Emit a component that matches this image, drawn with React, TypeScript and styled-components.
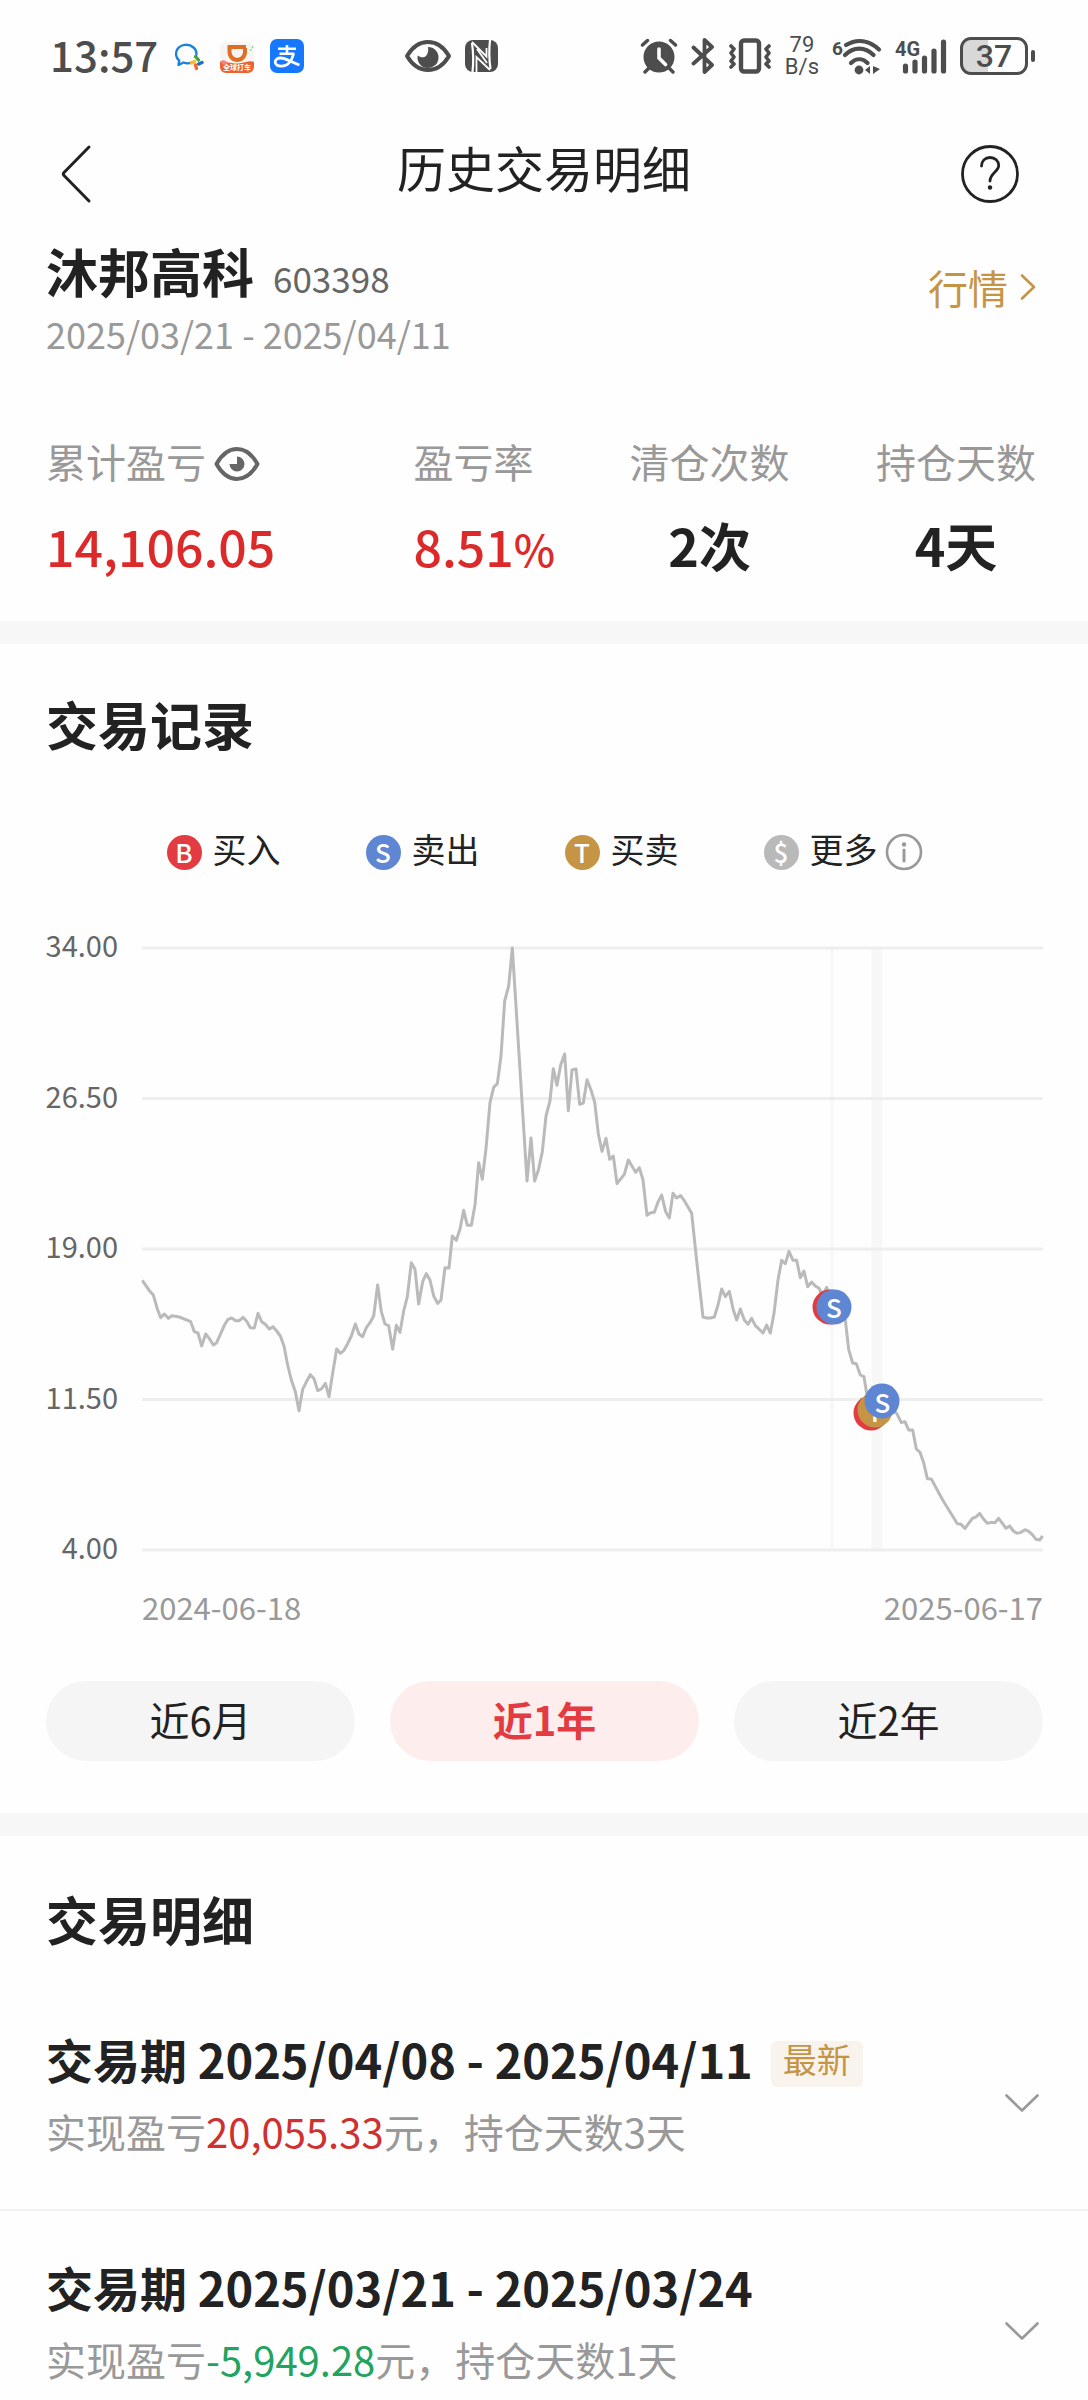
import React, { useState } from "react";
import styled, { createGlobalStyle } from "styled-components";

const GlobalStyle = createGlobalStyle`
  *, *::before, *::after { box-sizing: border-box; }
  body {
    margin: 0;
    background: #fefefe;
    color: #222;
    font-family: "Noto Sans CJK SC", "Noto Sans", sans-serif;
  }
  h1, h2, h3, p, ul, dl, dt, dd { margin: 0; padding: 0; font-weight: inherit; }
  ul { list-style: none; }
  button { margin: 0; padding: 0; border: 0; background: none; color: inherit; font: inherit; cursor: pointer; }
  svg { display: block; flex: none; }
`;

const RED = "#e23b41";
const BLUE = "#5f86d3";
const GOLD = "#c59545";
const GREY = "#b9b9b9";

/* ---------- status bar ---------- */

const StatusBar = styled.div`
  display: flex;
  align-items: center;
  height: 112px;
  padding: 0 52px 0 50px;
  color: #4d4d4d;
`;

const StatusGroup = styled.div<{ $gap: number; $before?: string }>`
  display: flex;
  align-items: center;
  gap: ${(p) => p.$gap}px;
  margin-left: ${(p) => p.$before ?? "0"};
`;

const Clock = styled.span`
  font-size: 42px;
  line-height: 48px;
  font-weight: 500;
  padding-bottom: 4px;
`;

const NetSpeed = styled.span`
  display: flex;
  flex-direction: column;
  align-items: center;
  font-family: Roboto, sans-serif;
  font-size: 22px;
  line-height: 22px;
`;

const WeComIcon = () => (
  <svg width="30" height="34" viewBox="0 0 30 34" fill="none">
    <path d="M17.5 23.5c-2.200 1-5.500 1-8 0L4.500 26l.700-4.300C1.500 18.500 1 13.500 3.500 10 7 5 15 4.500 19.500 8.500c2.300 2 3.200 4.600 2.900 7.300" stroke="#1b83d8" strokeWidth="2.400" strokeLinejoin="round" strokeLinecap="round" />
    <path d="M21.500 17.500l3 3.500" stroke="#3fa63f" strokeWidth="3.400" strokeLinecap="round" />
    <path d="M28 23.500l-3.300 1.500" stroke="#1b6fd0" strokeWidth="3.400" strokeLinecap="round" />
    <path d="M22.500 29.500l-1-3.500" stroke="#ee6a35" strokeWidth="3.400" strokeLinecap="round" />
    <path d="M17.500 24l3-1.500" stroke="#f6bf2d" strokeWidth="3.400" strokeLinecap="round" />
  </svg>
);

const DidiIcon = () => (
  <svg width="34" height="34" viewBox="0 0 34 34">
    <rect x="0" y="3" width="34" height="31" rx="6" fill="#f7f5f3" />
    <path d="M7.500 6h19.500v6.500C27 18.500 23 23 17.200 23S7.500 18.500 7.500 12.500z" fill="#e06d24" />
    <path d="M11.500 10h11.500v2.500c0 3.700-2.400 6.300-5.700 6.300s-5.800-2.600-5.800-6.300z" fill="#f7f5f3" />
    <path d="M26 6h2v3h-2z" fill="#f7f5f3" />
    <path d="M30 12l1.500-2M32 9l1-2" stroke="#7fd58c" strokeWidth="1.200" />
    <path d="M0 23c5-1.500 9 2 17 1.500S30 21 34 23v5a6 6 0 0 1-6 6H6a6 6 0 0 1-6-6z" fill="#ee6231" />
    <path d="M0 23c2-3 6-2 8 1l-4 2z" fill="#f3837b" />
    <text x="17" y="31" textAnchor="middle" fontSize="7" fontWeight="700" fill="#fff">全球打车</text>
  </svg>
);

const AlipayIcon = () => (
  <svg width="34" height="34" viewBox="0 0 34 34">
    <rect width="34" height="34" rx="7" fill="#1677ff" />
    <g fill="none" stroke="#fff" strokeWidth="2.600">
      <path d="M17 6v9M8 9.800h18M9.500 14.800h15" />
      <path d="M23.500 15c-1.500 6-5.500 12.200-12 12.200-4 0-6.300-1.700-6.300-4.200 0-2.600 2.400-4 5.300-4 5.500 0 11 4.500 19 7" strokeWidth="2.800" />
    </g>
  </svg>
);

const StatusEyeIcon = () => (
  <svg width="48" height="34" viewBox="0 0 48 34" fill="none">
    <path d="M3 17C8 8.500 15 3 24 3s16 5.500 21 14c-5 8.500-12 14-21 14S8 25.500 3 17z" stroke="#4d4d4d" strokeWidth="4" strokeLinejoin="round" />
    <path d="M24 8a10.500 10.500 0 1 1-10.300 8.500c2.500 2 6.300 2.500 8.300.500 2.200-2.200 2.600-6 2-9z" fill="#4d4d4d" />
  </svg>
);

const NfcIcon = () => (
  <svg width="33" height="34" viewBox="0 0 33 34">
    <rect x="0" y="1" width="33" height="32" rx="8" fill="#4d4d4d" />
    <path d="M7 4c1.500 10 1.500 20 .500 29M25 1c-1 9-1 19 .500 29" fill="none" stroke="#fefefe" strokeWidth="2.200" />
    <path d="M7 3l14.500 14.500V9M11.500 33V18L25 31M12 10l10 14" fill="none" stroke="#fefefe" strokeWidth="1.800" />
  </svg>
);

const AlarmIcon = () => (
  <svg width="38" height="36" viewBox="0 0 38 36" fill="none" stroke="#4d4d4d" strokeLinecap="round">
    <circle cx="19" cy="19" r="15.500" fill="#4d4d4d" stroke="none" />
    <path d="M2.500 7l5-4.500M35.500 7l-5-4.500M5 34l4-4M33 34l-4-4" strokeWidth="3.400" />
    <path d="M19 11v9l6.500 6.500" stroke="#fefefe" strokeWidth="3.600" />
  </svg>
);

const BluetoothIcon = () => (
  <svg width="24" height="36" viewBox="0 0 24 36" fill="none" stroke="#4d4d4d" strokeWidth="3.800" strokeLinejoin="round" strokeLinecap="round">
    <path d="M2.500 9.500L21 27l-7.500 7V2L21 9 2.500 25.500" />
  </svg>
);

const VibrateIcon = () => (
  <svg width="44" height="36" viewBox="0 0 44 36" fill="none" stroke="#4d4d4d" strokeLinejoin="round" strokeLinecap="round">
    <rect x="13" y="2.500" width="18" height="31" rx="3" strokeWidth="4.400" />
    <path d="M3 8l3 3-3 4 3 4-3 4 3 3-3 3M41 8l-3 3 3 4-3 4 3 4-3 3 3 3" strokeWidth="3.600" />
  </svg>
);

const WifiIcon = () => (
  <svg width="50" height="38" viewBox="0 0 50 38" overflow="visible" fill="none" stroke="#4d4d4d" strokeWidth="4.200" strokeLinecap="round">
    <text x="0" y="18" fontFamily="Roboto, sans-serif" fontSize="19" fontWeight="700" fill="#4d4d4d" stroke="none">6</text>
    <path d="M14 8c11-6.500 23-5 33 4.500M13 18c8.500-8.500 20-8.500 28.500 0M19 26c5-5 11.500-5 16.500 0" />
    <circle cx="27" cy="33" r="4.400" fill="#4d4d4d" stroke="none" />
    <path d="M38 29v8l-5-4zM41 29l7 3-7 5z" fill="#4d4d4d" stroke="none" />
  </svg>
);

const SignalIcon = () => (
  <svg width="52" height="38" viewBox="0 0 52 38" overflow="visible" fill="none" stroke="#4d4d4d" strokeWidth="5.200" strokeLinecap="round">
    <text x="0" y="19" fontFamily="Roboto, sans-serif" fontSize="20" fontWeight="700" fill="#4d4d4d" stroke="none">4G</text>
    <path d="M10.500 29v5M20 25v9M29.500 21v13M39 14v20M48.500 5v29" />
  </svg>
);

const Battery = styled.span`
  position: relative;
  display: flex;
  align-items: center;
  justify-content: center;
  width: 68px;
  height: 38px;
  margin-right: 8px;
  border: 3px solid #4d4d4d;
  border-radius: 11px;
  background: linear-gradient(to right, #d8d8d8 40%, transparent 40%);
  font-family: Roboto, sans-serif;
  font-size: 32px;
  line-height: 32px;
  font-weight: 500;

  &::after {
    content: "";
    position: absolute;
    right: -10px;
    top: 10px;
    width: 4px;
    height: 12px;
    border-radius: 2px;
    background: #4d4d4d;
  }
`;

/* ---------- header ---------- */

const Header = styled.header`
  display: grid;
  grid-template-columns: 76px 1fr 76px;
  align-items: start;
  padding: 26px 60px 25px;
`;

const HeaderButton = styled.button<{ $align: string }>`
  display: flex;
  align-items: center;
  justify-content: ${(p) => p.$align};
  height: 72px;
`;

const PageTitle = styled.h1`
  text-align: center;
  font-size: 49px;
  line-height: 58px;
  font-weight: 400;
`;

/* ---------- stock summary ---------- */

const Summary = styled.section`
  padding: 6px 52px 46px 46px;
`;

const StockHead = styled.div`
  display: flex;
  align-items: center;
  justify-content: space-between;
`;

const StockName = styled.h2`
  display: flex;
  align-items: baseline;
  gap: 19px;
  font-size: 52px;
  line-height: 60px;
  font-weight: 700;
`;

const StockCode = styled.span`
  font-size: 35px;
  line-height: 36px;
  font-weight: 400;
  color: #666;
`;

const DateRange = styled.p`
  margin-top: 8px;
  font-size: 36px;
  line-height: 48px;
  color: #999;
`;

const QuoteLink = styled.a`
  display: flex;
  align-items: center;
  gap: 12px;
  padding-bottom: 24px;
  font-size: 40px;
  line-height: 48px;
  color: ${GOLD};
  text-decoration: none;
`;

const Stats = styled.dl`
  display: grid;
  grid-template-columns: 1.7fr 1fr 1.14fr auto;
  margin-top: 80px;
`;

const Stat = styled.div<{ $centered?: boolean }>`
  justify-self: start;
  text-align: ${(p) => (p.$centered ? "center" : "left")};
`;

const StatLabel = styled.dt`
  display: flex;
  align-items: center;
  gap: 8px;
  font-size: 40px;
  line-height: 48px;
  color: #999;
`;

const StatValue = styled.dd<{ $gain?: boolean }>`
  margin-top: 30px;
  font-size: ${(p) => (p.$gain ? 50 : 52)}px;
  line-height: 60px;
  font-weight: ${(p) => (p.$gain ? 500 : 700)};
  color: ${(p) => (p.$gain ? "#dc2a2b" : "#222")};
  white-space: nowrap;
`;

const Percent = styled.span`
  font-size: 44px;
  line-height: 44px;
`;

const IconButton = styled.button`
  display: flex;
  align-items: center;
`;

const EyeButton = styled(IconButton)`
  padding-top: 6px;
`;

const Divider = styled.div`
  height: 23px;
  background: #f7f7f7;
`;

/* ---------- records ---------- */

const Panel = styled.section`
  padding: 50px 45px 52px 46px;
`;

const SectionTitle = styled.h2`
  font-size: 52px;
  line-height: 60px;
  font-weight: 700;
`;

const Legend = styled.ul`
  display: flex;
  justify-content: center;
  gap: 85px;
  margin-top: 78px;
`;

const LegendItem = styled.li`
  display: flex;
  align-items: center;
  gap: 11px;
  height: 40px;
`;

const LegendText = styled.span`
  padding-bottom: 6px;
  font-size: 34px;
  line-height: 40px;
`;

const Badge = styled.span<{ $color: string }>`
  display: flex;
  align-items: center;
  justify-content: center;
  width: 35px;
  height: 35px;
  border-radius: 50%;
  background: ${(p) => p.$color};
  color: #fff;
  font-size: 26px;
  line-height: 34px;
  font-weight: 500;
`;

const InfoButton = styled(IconButton)`
  margin-left: -4px;
`;

const Chart = styled.div`
  display: grid;
  grid-template-columns: 72px 1fr;
  column-gap: 24px;
  margin-top: 57px;
`;

const AxisLabels = styled.div`
  display: flex;
  flex-direction: column;
  justify-content: space-between;
  align-items: flex-end;
  height: 632px;
  font-size: 29px;
  line-height: 30px;
  color: #666;
`;

const Plot = styled.div`
  position: relative;
  height: 602px;
  margin-top: 19px;
`;

const PlotSvg = styled.svg`
  width: 100%;
  height: 100%;
  overflow: visible;
`;

const Marker = styled(Badge)`
  position: absolute;
  transform: translate(-50%, -50%);
`;

const AxisDates = styled.div`
  display: flex;
  justify-content: space-between;
  grid-column: 2;
  margin-top: 26px;
  font-size: 31px;
  line-height: 40px;
  color: #999;
`;

const RangeTabs = styled.div`
  display: grid;
  grid-template-columns: repeat(3, 1fr);
  gap: 35px;
  margin-top: 54px;
`;

const RangeTab = styled.button<{ $active: boolean }>`
  height: 80px;
  border-radius: 40px;
  background: ${(p) => (p.$active ? "#feeded" : "#f5f5f5")};
  color: ${(p) => (p.$active ? RED : "#222")};
  font-size: 40px;
  line-height: 48px;
  padding-bottom: 4px;
  font-weight: ${(p) => (p.$active ? 700 : 400)};
`;

/* ---------- details ---------- */

const Details = styled.section`
  padding-top: 53px;
`;

const DetailsTitle = styled(SectionTitle)`
  padding: 0 46px 34px;
`;

const Period = styled.li`
  display: flex;
  align-items: flex-end;
  justify-content: space-between;
  padding: 48px 48px 54px 46px;
  border-bottom: 2px solid #f2f2f2;

  &:last-child {
    padding-bottom: 16px;
    border-bottom: 0;
  }
`;

const PeriodHead = styled.div`
  display: flex;
  align-items: flex-end;
  gap: 18px;
`;

const PeriodTitle = styled.h3`
  font-size: 47px;
  line-height: 56px;
  font-weight: 700;
`;

const Tag = styled.span`
  padding: 0 12px 10px;
  border-radius: 6px;
  background: #f8f4ed;
  color: ${GOLD};
  font-size: 34px;
  line-height: 36px;
`;

const PeriodInfo = styled.p`
  margin-top: 20px;
  font-size: 40px;
  line-height: 48px;
  color: #999;
`;

const Amount = styled.span<{ $loss: boolean }>`
  color: ${(p) => (p.$loss ? "#22a35f" : "#cf3030")};
`;

const ExpandButton = styled(IconButton)`
  height: 104px;
`;

const EyeIcon = () => (
  <svg width="46" height="36" viewBox="0 0 46 36" fill="none">
    <path d="M2.500 18C7.500 9 14 3 23 3s15.500 6 20.500 15C38.500 27 32 33 23 33S7.500 27 2.500 18z" stroke="#666" strokeWidth="4" strokeLinejoin="round" />
    <path d="M23 10.500A7.500 7.500 0 1 1 15.500 18H23z" fill="#666" />
  </svg>
);

const InfoIcon = () => (
  <svg width="38" height="38" viewBox="0 0 38 38" fill="none">
    <circle cx="19" cy="19" r="17" stroke="#999" strokeWidth="2.600" />
    <circle cx="19" cy="11.500" r="2.200" fill="#999" />
    <path d="M19 17v11" stroke="#999" strokeWidth="3" strokeLinecap="round" />
  </svg>
);

/* Plot coordinates: 2703 wide, 1806 tall, origin at the top left. */
const PLOT_W = 2703;
const PLOT_H = 1806;

const priceLine = `
1,997 22,1028 34,1041 46,1083 56,1109 67,1098 79,1111 90,1103 112,1107 146,1121 157,1151 168,1155
179,1194 191,1158 202,1172 214,1191 224,1184 247,1132 258,1114 269,1110 281,1118 292,1118 303,1108
314,1120 325,1139 337,1140 348,1096 359,1121 370,1129 382,1143 393,1136 404,1149 415,1164 426,1194
437,1251 448,1296 460,1331 471,1388 482,1324 494,1300 505,1280 516,1292 527,1328 538,1323 550,1306
561,1346 572,1276 584,1203 595,1216 606,1207 617,1187 628,1164 640,1128 651,1158 662,1166 673,1139
684,1124 695,1104 707,1011 718,1091 729,1128 740,1133 752,1204 763,1132 774,1153 785,1089 796,1046
808,944 819,964 830,1068 842,1001 853,977 864,996 875,1044 887,1066 897,1056 909,959 921,960
931,864 943,877 954,843 965,787 976,832 988,832 999,771 1010,644 1021,694 1032,601 1044,464
1055,418 1066,407 1077,324 1088,159 1100,114 1111,0 1155,699 1167,570 1178,699 1189,667 1201,611
1212,504 1224,458 1234,362 1245,412 1256,351 1268,318 1279,488 1290,366 1302,363 1313,469 1324,465
1335,395 1347,426 1358,462 1369,558 1380,610 1392,571 1403,634 1414,624 1425,707 1447,679 1459,636
1481,673 1492,659 1503,696 1515,802 1526,794 1537,793 1549,760 1559,741 1571,791 1582,810 1593,736
1604,750 1616,743 1627,758 1649,796 1666,956 1683,1107 1694,1110 1706,1110 1717,1107 1728,1071
1739,1023 1750,1046 1762,1030 1773,1082 1784,1116 1795,1083 1807,1116 1818,1129 1829,1111 1840,1133
1852,1144 1863,1155 1874,1131 1885,1155 1896,1096 1908,996 1919,937 1930,947 1941,910 1953,937
1964,937 1975,989 1986,969 1997,1016 2009,1002 2020,1014 2031,1021 2042,1041 2054,1018 2065,1046
2094,1076 2110,1116 2120,1204 2132,1245 2143,1247 2155,1281 2166,1286 2174,1336 2199,1396 2214,1361
2264,1396 2278,1424 2289,1421 2300,1446 2312,1446 2323,1503 2334,1513 2345,1544 2356,1592 2368,1593
2402,1656 2446,1727 2457,1729 2469,1741 2491,1711 2502,1707 2513,1696 2525,1714 2536,1726 2547,1723
2559,1724 2570,1711 2592,1741 2603,1734 2614,1749 2625,1756 2637,1753 2649,1745 2660,1750 2671,1760
2682,1774 2693,1776 2702,1764`;

const holdBands = [
  { x: 2065, width: 10 },
  { x: 2189, width: 32 },
];

const markers = [
  { x: 2064, y: 1076, color: RED, letter: "" },
  { x: 2076, y: 1076, color: BLUE, letter: "S" },
  { x: 2188, y: 1394, color: RED, letter: "" },
  { x: 2199, y: 1386, color: GOLD, letter: "T" },
  { x: 2221, y: 1360, color: BLUE, letter: "S" },
];

const legend = [
  { letter: "B", text: "买入", color: RED },
  { letter: "S", text: "卖出", color: BLUE },
  { letter: "T", text: "买卖", color: GOLD },
  { letter: "$", text: "更多", color: GREY, info: true },
];

const prices = ["34.00", "26.50", "19.00", "11.50", "4.00"];
const ranges = ["近6月", "近1年", "近2年"];

const periods = [
  { from: "2025/04/08", to: "2025/04/11", amount: "20,055.33", days: 3, latest: true },
  { from: "2025/03/21", to: "2025/03/24", amount: "-5,949.28", days: 1, latest: false },
];

const PriceChart = () => (
  <Chart>
    <AxisLabels>
      {prices.map((p) => (
        <span key={p}>{p}</span>
      ))}
    </AxisLabels>
    <Plot>
      <PlotSvg viewBox={`0 0 ${PLOT_W} ${PLOT_H}`} preserveAspectRatio="none" role="img" aria-label="股价走势">
        {holdBands.map((b) => (
          <rect key={b.x} x={b.x} y="0" width={b.width} height={PLOT_H} fill="#f7f7f7" />
        ))}
        {prices.map((p, i) => (
          <line
            key={p}
            x1="0"
            x2={PLOT_W}
            y1={(PLOT_H / 4) * i}
            y2={(PLOT_H / 4) * i}
            stroke="#eeeeee"
            strokeWidth="3"
            vectorEffect="non-scaling-stroke"
          />
        ))}
        <polyline
          points={priceLine}
          fill="none"
          stroke="#bababa"
          strokeWidth="3"
          strokeLinejoin="round"
          vectorEffect="non-scaling-stroke"
        />
      </PlotSvg>
      {markers.map((m) => (
        <Marker
          key={m.x}
          $color={m.color}
          style={{ left: `${(m.x / PLOT_W) * 100}%`, top: `${(m.y / PLOT_H) * 100}%` }}
        >
          {m.letter}
        </Marker>
      ))}
    </Plot>
    <AxisDates>
      <span>2024-06-18</span>
      <span>2025-06-17</span>
    </AxisDates>
  </Chart>
);

export default function App() {
  const [range, setRange] = useState("近1年");

  return (
    <>
      <GlobalStyle />
      <StatusBar>
        <StatusGroup $gap={16}>
          <Clock>13:57</Clock>
          <WeComIcon />
          <DidiIcon />
          <AlipayIcon />
        </StatusGroup>
        <StatusGroup $gap={13} $before="100px">
          <StatusEyeIcon />
          <NfcIcon />
        </StatusGroup>
        <StatusGroup $gap={13} $before="auto">
          <AlarmIcon />
          <BluetoothIcon />
          <VibrateIcon />
          <NetSpeed>
            <span>79</span>
            <span>B/s</span>
          </NetSpeed>
          <WifiIcon />
          <SignalIcon />
          <Battery>37</Battery>
        </StatusGroup>
      </StatusBar>

      <Header>
        <HeaderButton $align="flex-start" aria-label="返回">
          <svg width="32" height="60" viewBox="0 0 32 60" fill="none" stroke="#222" strokeWidth="3" strokeLinecap="round" strokeLinejoin="round">
            <path d="M29 3L4 28.500q-1.500 1.500 0 3L29 57" />
          </svg>
        </HeaderButton>
        <PageTitle>历史交易明细</PageTitle>
        <HeaderButton $align="center" aria-label="帮助">
          <svg width="60" height="60" viewBox="0 0 60 60" fill="none" stroke="#222" strokeWidth="2.800" strokeLinecap="round">
            <circle cx="30" cy="30" r="27.500" />
            <path d="M21.500 22c0-5 3.500-8.500 8.500-8.500s8.700 3.500 8.700 8c0 6-8.700 8-8.700 15.500" />
            <circle cx="30" cy="43.500" r="2.200" fill="#222" stroke="none" />
          </svg>
        </HeaderButton>
      </Header>

      <main>
        <Summary>
          <StockHead>
            <div>
              <StockName>
                沐邦高科<StockCode>603398</StockCode>
              </StockName>
              <DateRange>2025/03/21 - 2025/04/11</DateRange>
            </div>
            <QuoteLink href="#quote">
              行情
              <svg width="16" height="28" viewBox="0 0 16 28" fill="none" stroke={GOLD} strokeWidth="2.600" strokeLinecap="round" strokeLinejoin="round">
                <path d="M2 2.500L14 14 2 25.500" />
              </svg>
            </QuoteLink>
          </StockHead>
          <Stats>
            <Stat>
              <StatLabel>
                累计盈亏
                <EyeButton aria-label="隐藏金额">
                  <EyeIcon />
                </EyeButton>
              </StatLabel>
              <StatValue $gain>14,106.05</StatValue>
            </Stat>
            <Stat>
              <StatLabel>盈亏率</StatLabel>
              <StatValue $gain>
                8.51<Percent>%</Percent>
              </StatValue>
            </Stat>
            <Stat $centered>
              <StatLabel>清仓次数</StatLabel>
              <StatValue>2次</StatValue>
            </Stat>
            <Stat $centered>
              <StatLabel>持仓天数</StatLabel>
              <StatValue>4天</StatValue>
            </Stat>
          </Stats>
        </Summary>

        <Divider />

        <Panel>
          <SectionTitle>交易记录</SectionTitle>
          <Legend>
            {legend.map((l) => (
              <LegendItem key={l.letter}>
                <Badge $color={l.color}>{l.letter}</Badge>
                <LegendText>{l.text}</LegendText>
                {l.info && (
                  <InfoButton aria-label="图例说明">
                    <InfoIcon />
                  </InfoButton>
                )}
              </LegendItem>
            ))}
          </Legend>
          <PriceChart />
          <RangeTabs>
            {ranges.map((r) => (
              <RangeTab key={r} $active={r === range} aria-pressed={r === range} onClick={() => setRange(r)}>
                {r}
              </RangeTab>
            ))}
          </RangeTabs>
        </Panel>

        <Divider />

        <Details>
          <DetailsTitle>交易明细</DetailsTitle>
          <ul>
            {periods.map((p) => (
              <Period key={p.from}>
                <div>
                  <PeriodHead>
                    <PeriodTitle>
                      交易期 {p.from} - {p.to}
                    </PeriodTitle>
                    {p.latest && <Tag>最新</Tag>}
                  </PeriodHead>
                  <PeriodInfo>
                    实现盈亏<Amount $loss={p.amount.startsWith("-")}>{p.amount}</Amount>元，持仓天数{p.days}天
                  </PeriodInfo>
                </div>
                <ExpandButton aria-label="展开">
                  <svg width="36" height="20" viewBox="0 0 36 20" fill="none" stroke="#999" strokeWidth="2.600" strokeLinecap="round" strokeLinejoin="round">
                    <path d="M2.500 2.500L18 17.500 33.500 2.500" />
                  </svg>
                </ExpandButton>
              </Period>
            ))}
          </ul>
        </Details>
      </main>
    </>
  );
}
